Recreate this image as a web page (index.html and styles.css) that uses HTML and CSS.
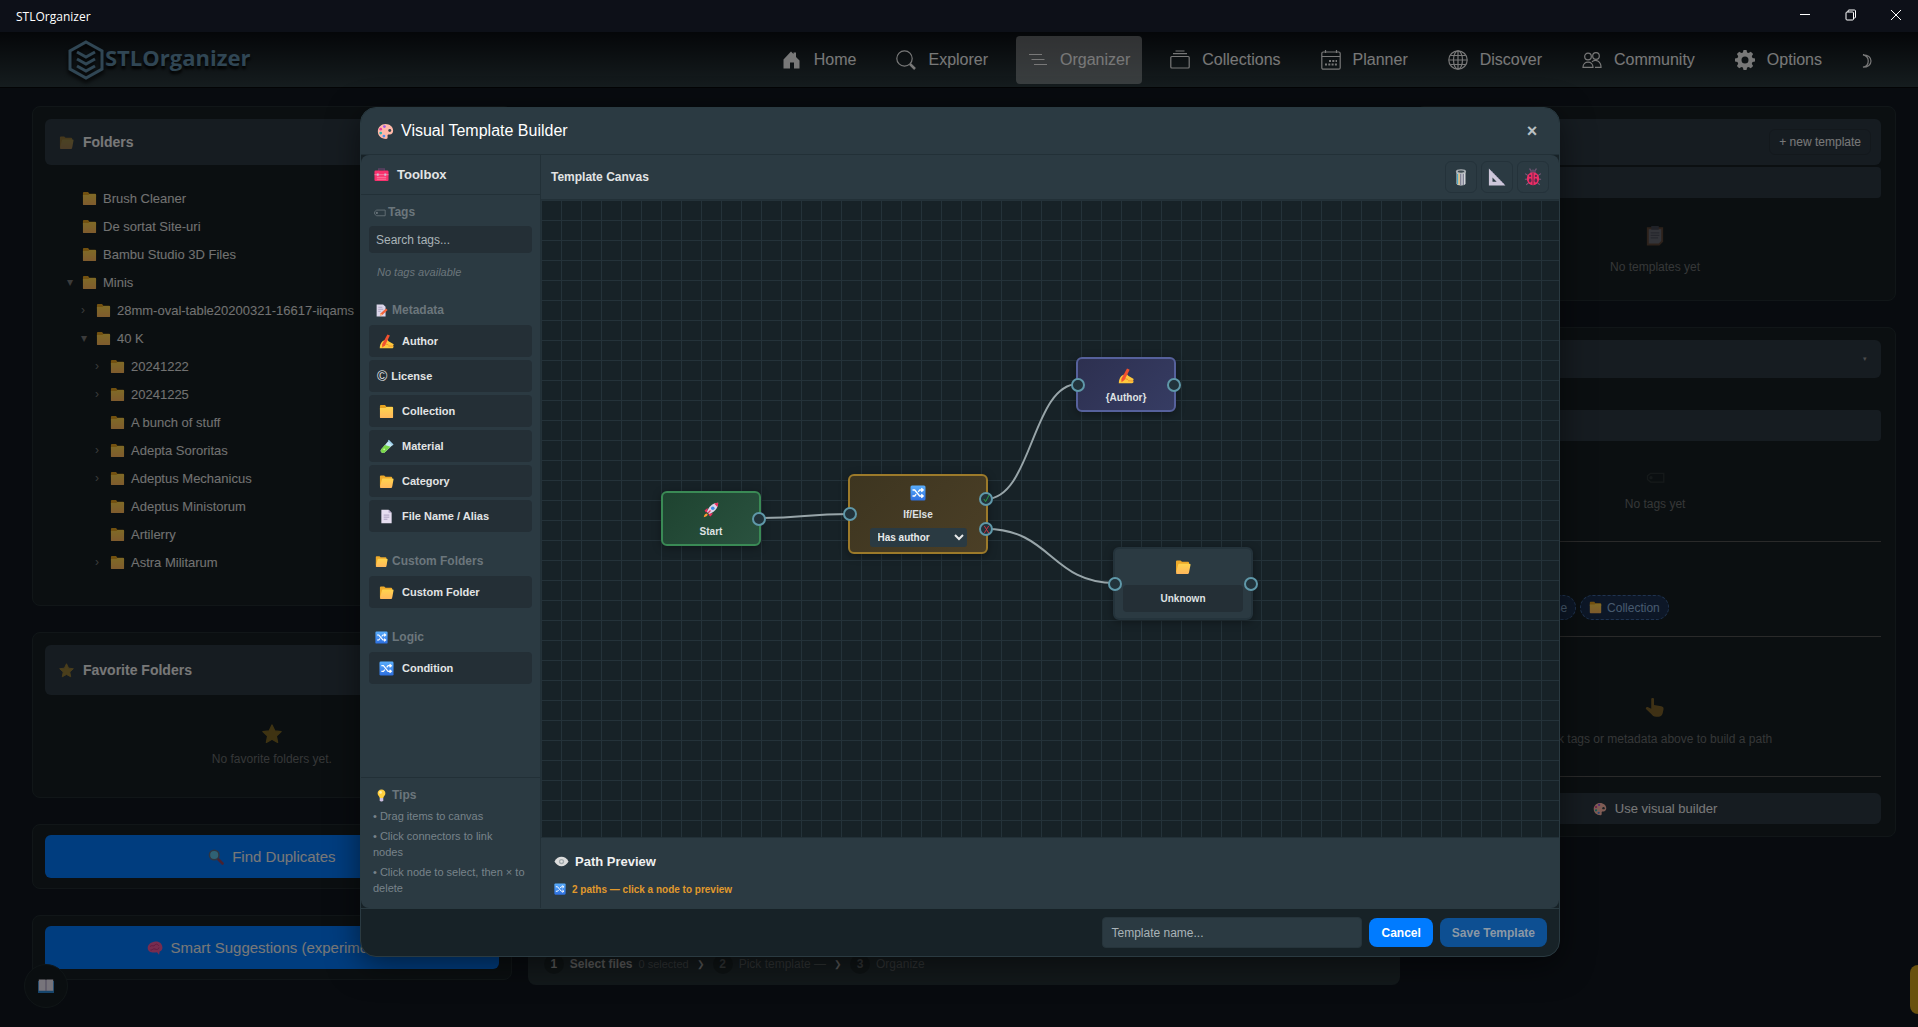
FILE: index.html
```html
<!DOCTYPE html>
<html lang="en">

<head>
    <meta charset="UTF-8">
    <meta name="viewport" content="width=device-width, initial-scale=1.0">
    <title>STLOrganizer</title>
    <link rel="stylesheet" href="styles.css">
</head>

<body>
    <!-- icon sprite -->
    <svg class="sprite" aria-hidden="true">
        <defs>
            <linearGradient id="gFolder" x1="0" y1="0" x2="0" y2="1">
                <stop offset="0" stop-color="#ffd44d" />
                <stop offset="1" stop-color="#ffb75c" />
            </linearGradient>
            <linearGradient id="gBlue" x1="0" y1="0" x2="0" y2="1">
                <stop offset="0" stop-color="#5aaefc" />
                <stop offset="1" stop-color="#2d6fe0" />
            </linearGradient>
        </defs>
        <symbol id="i-folder" viewBox="0 0 16 16">
            <path d="M1 2a1 1 0 0 1 1-1h4.500l1.300 1.800H14a1 1 0 0 1 1 1V6H1z" fill="#e5a220" />
            <path d="M1 4.200h5.800l1.200-.9h6a1 1 0 0 1 1 1V14a1 1 0 0 1-1 1H2a1 1 0 0 1-1-1z" fill="url(#gFolder)" />
        </symbol>
        <symbol id="i-open" viewBox="0 0 16 16">
            <path d="M1 2.500a1 1 0 0 1 1-1h3.500l1.500 1.300h6a1 1 0 0 1 1 1V13H1z" fill="#eda92a" />
            <path d="M3.200 5.500a1 1 0 0 1 1-.8h10.300a1 1 0 0 1 1 1.200l-1.600 8.200a1 1 0 0 1-1 .8H2a1 1 0 0 1-1-1z" fill="url(#gFolder)" />
        </symbol>
        <symbol id="i-palette" viewBox="0 0 16 16">
            <path d="M8 1c4 0 7.200 2.700 7.200 6.200 0 2.200-1.500 3.600-3.200 3.600-1 0-1.700-.1-2 .5-.4.9.9 3.700-1.500 3.700C4 15 .8 12 .8 8S4 1 8 1z" fill="#ffb8a8" />
            <circle cx="3.500" cy="5.800" r="1.300" fill="#e8409a" />
            <circle cx="7" cy="3.400" r="1.300" fill="#a259e8" />
            <circle cx="3.500" cy="9.500" r="1.300" fill="#27b8b0" />
            <circle cx="6.500" cy="12.300" r="1.300" fill="#4a90f0" />
            <circle cx="12" cy="7" r="1.400" fill="#37434a" />
        </symbol>
        <symbol id="i-toolbox" viewBox="0 0 16 16">
            <path d="M5 4V2.200h6V4" fill="none" stroke="#5d3f63" stroke-width="1.500" />
            <rect x=".5" y="3.800" width="15" height="11.200" rx="1.200" fill="#f8316d" />
            <path d="M.5 8.200h15M3 11h10M3 13h10" stroke="#ff8fae" stroke-width=".8" />
            <path d="M3 6.800h2v2.400H3zM11 6.800h2v2.400h-2z" fill="#c9c0d8" />
        </symbol>
        <symbol id="i-tag" viewBox="0 0 16 16">
            <path d="M4.500 5H15v7H4.500L2 10V7z" fill="none" stroke="currentColor" />
            <circle cx="4.800" cy="8.500" r="1.300" fill="currentColor" />
        </symbol>
        <symbol id="i-memo" viewBox="0 0 16 16">
            <path d="M2 .5h8l3 3v12H2z" fill="#dcd6ea" />
            <path d="M4 4h5M4 6.500h6M4 9h3" stroke="#a79dbb" />
            <path d="M13.500 5.500l2 2-6.500 6-3 1 1-3z" fill="#f4643c" />
            <path d="M6 14.500l1-3 2 2z" fill="#ffc28a" />
        </symbol>
        <symbol id="i-write" viewBox="0 0 16 16">
            <path d="M.8 15.200c0-3 1-5.700 3.200-7.700L8.500 5.500l1.700 2.300 5.100 2.900c.6.4.4 1.200-.2 1.300l.4 1.500c0 .9-.6 1.700-1.500 1.700z" fill="#ffc83d" />
            <path d="M6.500 10.500l3.500 1M10 12.800l5 .2" stroke="#ee8b2c" stroke-width=".9" />
            <path d="M9 .5l2.600 1.200L6.500 12 3.500 14.300l-.2-3.300z" fill="#f2512f" />
        </symbol>
        <symbol id="i-tube" viewBox="0 0 16 16">
            <path d="M10 2l4.500 4.500L6 14.300c-2.500 2-5.500-1-3.600-3.400z" fill="#c5e6f7" />
            <path d="M6.300 6.300l6 2L6 14.300c-2.500 2-5.500-1-3.600-3.400z" fill="#79d64a" />
            <path d="M10.500.8l5 5-1 1-5-5z" fill="#9fd4f0" />
            <circle cx="5.500" cy="11" r="1" fill="#c8f59a" />
        </symbol>
        <symbol id="i-page" viewBox="0 0 16 16">
            <path d="M2.500.8h7.700l3.300 3.300v11.100h-11z" fill="#e6def0" />
            <path d="M10.200.8l3.300 3.300h-3.300z" fill="#b5a9c9" />
            <path d="M5 6.500h6M5 8.700h6M5 10.900h4" stroke="#a79cbd" />
        </symbol>
        <symbol id="i-shuffle" viewBox="0 0 16 16">
            <rect x=".5" y=".5" width="15" height="15" rx="1.500" fill="url(#gBlue)" />
            <path d="M2.500 5h2.200l5 6h3M2.500 11h2.200l1.500-1.800M8.200 6.800L9.700 5h3M11.300 3.300L13.200 5l-1.900 1.700M11.300 9.300l1.900 1.700-1.900 1.700" fill="none" stroke="#fff" stroke-width="1.300" />
        </symbol>
        <symbol id="i-bulb" viewBox="0 0 16 16">
            <path d="M8 .5c3 0 4.800 2.200 4.800 4.700 0 2.600-2.300 3.600-2.600 6H5.800c-.3-2.400-2.600-3.400-2.600-6C3.200 2.700 5 .5 8 .5z" fill="#ffcf3f" />
            <circle cx="6.800" cy="4.200" r="1.700" fill="#fff0ad" />
            <path d="M5.800 11.200h4.400v2.500L9 15.500H7l-1.200-1.800z" fill="#cdbfe0" />
        </symbol>
        <symbol id="i-eye" viewBox="0 0 16 16">
            <path d="M.5 8C2.500 4.500 5 3 8 3S13.500 4.500 15.500 8C13.500 11.500 11 13 8 13S2.500 11.500.5 8z" fill="#dcdcdc" />
            <circle cx="8" cy="8" r="2.800" fill="#a3abae" />
            <circle cx="8" cy="8" r="1.300" fill="#e2e2e2" />
        </symbol>
        <symbol id="i-trash" viewBox="0 0 16 16">
            <path d="M4 3h8v10.500c0 1.200-1.700 2-4 2s-4-.8-4-2z" fill="#d3d6da" />
            <path d="M5 5v9.500" stroke="#3fa7c9" />
            <path d="M6.300 5v9.800" stroke="#e5a93b" stroke-width=".8" />
            <path d="M7.800 5v10M10 5v10" stroke="#6d6f86" />
            <ellipse cx="8" cy="3" rx="4.500" ry="2" fill="#a9afb3" />
            <ellipse cx="8" cy="3.200" rx="2.900" ry="1" fill="#3f4c53" />
        </symbol>
        <symbol id="i-ruler" viewBox="0 0 16 16">
            <path d="M.8.5L15.500 15.500H.8zM4 8.500v3.700h3.700z" fill="#cdc6d9" fill-rule="evenodd" />
            <path d="M3 2.700l11.500 11.800" stroke="#a99bc4" stroke-width=".8" stroke-dasharray="1 1.500" />
        </symbol>
        <symbol id="i-bug" viewBox="0 0 16 16">
            <path d="M1 5l3 2M15 5l-3 2M.8 10h3M15.200 10h-3M2 15l2.500-2.500M14 15l-2.500-2.500M6 2.500L5 .5M10 2.500l1-2" stroke="#7b5a7c" />
            <circle cx="8" cy="4" r="2.600" fill="#5b4763" />
            <ellipse cx="8" cy="9.500" rx="5.500" ry="5.800" fill="#ee2e66" />
            <path d="M8 4v11" stroke="#5b2143" stroke-width=".8" />
            <ellipse cx="5.500" cy="11" rx="1.200" ry="1.900" fill="#5a2a4c" />
            <ellipse cx="10.500" cy="11" rx="1.200" ry="1.900" fill="#5a2a4c" />
            <circle cx="5.400" cy="7" r="1" fill="#5a2a4c" />
            <circle cx="10.600" cy="7" r="1" fill="#5a2a4c" />
        </symbol>
        <symbol id="i-rocket" viewBox="0 0 16 16">
            <path d="M4.500 6L1.500 8.500l1.500 2 2-1zM10 11.500L7.500 14.500l-2-1.500 1-2z" fill="#e8325f" />
            <path d="M4 11.500c-1.800 0-3 1.500-3.200 3.700 2-.2 3.700-1.200 3.900-2.900z" fill="#ff9a2f" />
            <path d="M15.200.8C9.500.8 5.500 5 4 10l2 2c5-1.500 9.200-5.500 9.200-11.200z" fill="#dcd6ea" />
            <path d="M15.200.8c-1.500 0-2.900.3-4.100.8l3.300 3.300c.5-1.200.8-2.600.8-4.100z" fill="#e8325f" />
            <circle cx="9.800" cy="6.200" r="1.800" fill="#3f8fe8" />
            <path d="M5 11l2.500-2.500" stroke="#e8325f" stroke-width="1.300" />
        </symbol>
        <symbol id="i-star" viewBox="0 0 16 16">
            <path d="M8 .8l2.200 4.700 5.100.6-3.800 3.500 1 5.100L8 12.200l-4.500 2.500 1-5.100L.7 6.100l5.100-.6z" fill="#fcbf2a" stroke="#fcbf2a" stroke-linejoin="round" />
        </symbol>
        <symbol id="i-search" viewBox="0 0 16 16">
            <path d="M9.500 9.500l5 5" stroke="#8e4463" stroke-width="2.600" stroke-linecap="round" />
            <circle cx="6.200" cy="6" r="4.800" fill="#5fc3e8" stroke="#5d6b85" stroke-width="1.500" />
        </symbol>
        <symbol id="i-brain" viewBox="0 0 16 16">
            <path d="M8.500 1.500c3.800-.3 6.700 2.200 6.900 5.700.2 2.300-1 3.800-2.700 4.300l-.7 3.200-2-2.400C5 13.300.7 12 .7 8c0-3.500 3.500-6.200 7.800-6.500z" fill="#f0599e" />
            <path d="M3 6.500c2-2 3.500.5 5-1.500s3 0 4 1M3.500 10c2 .5 2.500-2 4.500-1s3.500.5 4-1.500" fill="none" stroke="#c83482" />
        </symbol>
        <symbol id="i-book" viewBox="0 0 16 16">
            <path d="M0 3h16v12H0z" fill="#2c8ad8" />
            <path d="M.8 1.500h6.400L8 2l.8-.5h6.400v11.200H.8z" fill="#efe9f7" />
            <path d="M8 2v11" stroke="#9b8fb5" />
        </symbol>
        <symbol id="i-clip" viewBox="0 0 16 16">
            <path d="M1.500 1h13v11.500l-3 3h-10z" fill="#b0714f" />
            <path d="M3 2.500h10V12l-2 2H3z" fill="#c9c4d6" />
            <path d="M5 0h6v3H5z" fill="#777289" />
            <path d="M4.500 5.500h7M4.500 7.500h7M4.500 9.500h6" stroke="#8e88a0" />
        </symbol>
        <symbol id="i-point" viewBox="0 0 16 16">
            <path d="M5 1.500c0-1 2.200-1 2.200 0v4.800l5.800 1c1.500.3 2 1.200 1.800 2.500l-.6 3c-.4 1.800-1.700 2.900-3.500 2.900H9c-2.200 0-3-1-4-2.200L.8 9.500c-.6-1 .7-2 1.700-1.400L5 9.300z" fill="#ffb637" />
        </symbol>
    </svg>

    <header class="titlebar">
        <span>STLOrganizer</span>
        <div class="window-btns">
            <button type="button" aria-label="Minimize"><svg width="12" height="12" viewBox="0 0 12 12"><path d="M1 5.500h10" /></svg></button>
            <button type="button" aria-label="Restore"><svg width="12" height="12" viewBox="0 0 12 12"><rect x="1" y="3" width="7.500" height="8" rx="1" /><path d="M3 3V2q0-1 1-1h5.500q1 0 1 1v6q0 1-1 1h-1" /></svg></button>
            <button type="button" aria-label="Close"><svg width="12" height="12" viewBox="0 0 12 12"><path d="M1 1l10 10M11 1L1 11" /></svg></button>
        </div>
    </header>

    <div class="app">
        <nav class="navbar">
            <a class="logo" href="#">
                <svg width="36" height="40" viewBox="0 0 36 40">
                    <path d="M18 2l16 9v18l-16 9-16-9V11z" />
                    <path d="M9 12l9 5 9-5M9 19l9 5 9-5M9 26l9 5 9-5" />
                </svg>
                <span>STLOrganizer</span>
            </a>
            <div class="nav-links">
                <a href="#"><svg viewBox="0 0 20 20"><path class="fill" d="M1.500 9.500L9 1.500l2.500 2.600V2.500H14V7l3.500 3.500V18.500h-5.500v-6H8v6H1.500z" /></svg>Home</a>
                <a href="#"><svg viewBox="0 0 20 20"><circle cx="8.500" cy="8.500" r="7.700" /><path d="M14 14l5 5" stroke-width="2.500" /></svg>Explorer</a>
                <a href="#" class="active"><svg viewBox="0 0 20 20"><path d="M1 4.500h13M3.500 9.500h13M6 14.500h13" /></svg>Organizer</a>
                <a href="#"><svg viewBox="0 0 20 20"><rect x=".8" y="6.500" width="18.400" height="11.500" rx="1" /><path d="M3 3.700h14M5.500 1h9" /></svg>Collections</a>
                <a href="#"><svg viewBox="0 0 20 20"><rect x=".8" y="2" width="18.400" height="17.200" rx="1.500" /><path d="M1 6.500h18M4.500 0v3M15.500 0v3" /><path d="M4 14.500h12M8 11h8" stroke-width="2" stroke-dasharray="2 1.300" /></svg>Planner</a>
                <a href="#"><svg viewBox="0 0 20 20"><circle cx="10" cy="10" r="9.200" /><ellipse cx="10" cy="10" rx="4.500" ry="9.200" /><path d="M10 1v18M1 10h18M2.500 5.500h15M2.500 14.500h15" /></svg>Discover</a>
                <a href="#"><svg viewBox="0 0 20 20"><circle cx="6" cy="6.500" r="3.300" /><circle cx="14" cy="6" r="3.300" /><path d="M1 17.300c0-7 10-7 10 0zM10 11.800c3.500-3.200 9-.8 9 5.500h-6" /></svg>Community</a>
                <a href="#"><svg viewBox="0 0 20 20"><path class="fill" fill-rule="evenodd" d="M8.500 0h3l.6 2.500 1.500.6 2.200-1.300 2.300 2.300-1.300 2.200.7 1.700 2.500.5v3l-2.500.6-.7 1.600 1.300 2.200-2.300 2.300-2.200-1.300-1.500.6-.6 2.500h-3l-.6-2.500-1.500-.6-2.200 1.300-2.300-2.300 1.300-2.200-.7-1.600L0 11.500v-3L2.500 8l.7-1.700-1.300-2.200 2.300-2.300 2.200 1.300 1.500-.6zM10 6.500a3.500 3.500 0 1 0 0 7 3.500 3.500 0 0 0 0-7z" /></svg>Options</a>
                <button type="button" class="theme-btn" aria-label="Toggle theme"><svg width="12" height="14" viewBox="0 0 12 14"><path class="line" d="M1 .8c5 0 8 2.700 8 6.200s-3 6.200-8 6.200c7-1.500 7-10.900 0-12.400z" /></svg></button>
            </div>
        </nav>

        <main class="columns">
            <div class="col">
                <section class="panel tree-panel">
                    <h2 class="panel-head"><svg class="ic dim"><use href="#i-open" /></svg>Folders</h2>
                    <ul class="tree">
                        <li><i></i><svg class="ic"><use href="#i-folder" /></svg>Brush Cleaner</li>
                        <li><i></i><svg class="ic"><use href="#i-folder" /></svg>De sortat Site-uri</li>
                        <li><i></i><svg class="ic"><use href="#i-folder" /></svg>Bambu Studio 3D Files</li>
                        <li><i>▾</i><svg class="ic"><use href="#i-folder" /></svg>Minis</li>
                        <li class="l1"><i>›</i><svg class="ic"><use href="#i-folder" /></svg>28mm-oval-table20200321-16617-iiqams</li>
                        <li class="l1"><i>▾</i><svg class="ic"><use href="#i-folder" /></svg>40 K</li>
                        <li class="l2"><i>›</i><svg class="ic"><use href="#i-folder" /></svg>20241222</li>
                        <li class="l2"><i>›</i><svg class="ic"><use href="#i-folder" /></svg>20241225</li>
                        <li class="l2"><i></i><svg class="ic"><use href="#i-folder" /></svg>A bunch of stuff</li>
                        <li class="l2"><i>›</i><svg class="ic"><use href="#i-folder" /></svg>Adepta Sororitas</li>
                        <li class="l2"><i>›</i><svg class="ic"><use href="#i-folder" /></svg>Adeptus Mechanicus</li>
                        <li class="l2"><i></i><svg class="ic"><use href="#i-folder" /></svg>Adeptus Ministorum</li>
                        <li class="l2"><i></i><svg class="ic"><use href="#i-folder" /></svg>Artilerry</li>
                        <li class="l2"><i>›</i><svg class="ic"><use href="#i-folder" /></svg>Astra Militarum</li>
                    </ul>
                </section>
                <section class="panel fav-panel">
                    <h2 class="panel-head tall"><svg class="ic dim"><use href="#i-star" /></svg>Favorite Folders</h2>
                    <div class="empty"><svg><use href="#i-star" /></svg>No favorite folders yet.</div>
                </section>
                <section class="panel">
                    <button type="button" class="big-btn"><svg><use href="#i-search" /></svg>Find Duplicates</button>
                </section>
                <section class="panel">
                    <button type="button" class="big-btn"><svg><use href="#i-brain" /></svg>Smart Suggestions (experimental)</button>
                </section>
            </div>

            <div class="col center">
                <ol class="steps">
                    <li class="on"><b>1</b><strong>Select files</strong><small>0 selected</small></li>
                    <li><b>2</b>Pick template —</li>
                    <li><b>3</b>Organize</li>
                </ol>
            </div>

            <div class="col right">
                <section class="panel templates">
                    <div class="panel-head"><button type="button" class="new-btn">+ new template</button></div>
                    <div class="bar"></div>
                    <div class="empty"><svg><use href="#i-clip" /></svg>No templates yet</div>
                </section>
                <section class="panel tags">
                    <div class="panel-head short"><span class="caret">▾</span></div>
                    <div class="bar"></div>
                    <div class="empty tag-empty"><svg><use href="#i-tag" /></svg>No tags yet</div>
                    <div class="chips">
                        <button type="button" class="chip"><svg><use href="#i-write" /></svg>Author</button>
                        <button type="button" class="chip">© License</button>
                        <button type="button" class="chip"><svg><use href="#i-folder" /></svg>Collection</button>
                    </div>
                    <div class="empty path"><svg><use href="#i-point" /></svg>Click tags or metadata above to build a path</div>
                    <div class="builder">
                        <button type="button" class="builder-btn"><svg><use href="#i-palette" /></svg>Use visual builder</button>
                    </div>
                </section>
            </div>
        </main>

        <button type="button" class="help-btn" aria-label="Manual"><svg><use href="#i-book" /></svg></button>
        <div class="side-tab"></div>

        <div class="overlay">
            <div class="modal" role="dialog" aria-labelledby="modalTitle">
                <div class="modal-head">
                    <h1 id="modalTitle"><svg><use href="#i-palette" /></svg>Visual Template Builder</h1>
                    <button type="button" class="close-btn" aria-label="Close">×</button>
                </div>

                <div class="modal-body">
                    <aside class="toolbox">
                        <h2><svg><use href="#i-toolbox" /></svg>Toolbox</h2>
                        <div class="tools">
                            <h3 class="tag-head"><svg><use href="#i-tag" /></svg>Tags</h3>
                            <input type="text" class="tag-search" placeholder="Search tags..." aria-label="Search tags">
                            <p class="none">No tags available</p>

                            <h3><svg><use href="#i-memo" /></svg>Metadata</h3>
                            <div class="items">
                                <button type="button"><svg><use href="#i-write" /></svg>Author</button>
                                <button type="button" class="plain"><span>©</span>License</button>
                                <button type="button"><svg><use href="#i-folder" /></svg>Collection</button>
                                <button type="button"><svg><use href="#i-tube" /></svg>Material</button>
                                <button type="button"><svg><use href="#i-open" /></svg>Category</button>
                                <button type="button"><svg><use href="#i-page" /></svg>File Name / Alias</button>
                            </div>

                            <h3><svg><use href="#i-open" /></svg>Custom Folders</h3>
                            <div class="items">
                                <button type="button"><svg><use href="#i-open" /></svg>Custom Folder</button>
                            </div>

                            <h3><svg><use href="#i-shuffle" /></svg>Logic</h3>
                            <div class="items">
                                <button type="button"><svg><use href="#i-shuffle" /></svg>Condition</button>
                            </div>
                        </div>
                        <div class="tips">
                            <h3><svg><use href="#i-bulb" /></svg>Tips</h3>
                            <p>• Drag items to canvas</p>
                            <p>• Click connectors to link<br>nodes</p>
                            <p>• Click node to select, then × to<br>delete</p>
                        </div>
                    </aside>

                    <div class="work">
                        <div class="canvas-head">
                            <h2>Template Canvas</h2>
                            <div class="canvas-btns">
                                <button type="button" aria-label="Clear"><svg><use href="#i-trash" /></svg></button>
                                <button type="button" aria-label="Auto layout"><svg><use href="#i-ruler" /></svg></button>
                                <button type="button" aria-label="Debug"><svg><use href="#i-bug" /></svg></button>
                            </div>
                        </div>

                        <div class="canvas">
                            <svg class="wires">
                                <path d="M218 318C264 318 263 314 309 314" />
                                <path d="M445 299C491 299 491 184 537 184" />
                                <path d="M445 329C510 329 510 383 574 383" />
                            </svg>
                            <div class="node start">
                                <svg class="nic"><use href="#i-rocket" /></svg>
                                <span>Start</span>
                                <i class="port out"></i>
                            </div>
                            <div class="node cond">
                                <svg class="nic"><use href="#i-shuffle" /></svg>
                                <span>If/Else</span>
                                <select aria-label="Condition">
                                    <option>Has author</option>
                                    <option>Has license</option>
                                </select>
                                <i class="port in"></i>
                                <i class="port out yes"><svg viewBox="0 0 10 10"><path d="M2 5.500L4 8.500 8 1" /></svg></i>
                                <i class="port out no"><svg viewBox="0 0 10 10"><path d="M2.500 1l5 8M7.500 1l-5 8" /></svg></i>
                            </div>
                            <div class="node meta">
                                <svg class="nic"><use href="#i-write" /></svg>
                                <span>{Author}</span>
                                <i class="port in"></i>
                                <i class="port out"></i>
                            </div>
                            <div class="node custom">
                                <svg class="nic"><use href="#i-open" /></svg>
                                <input type="text" value="Unknown" aria-label="Folder name">
                                <i class="port in"></i>
                                <i class="port out"></i>
                            </div>
                        </div>

                        <div class="preview">
                            <h2><svg><use href="#i-eye" /></svg>Path Preview</h2>
                            <p><svg><use href="#i-shuffle" /></svg>2 paths — click a node to preview</p>
                        </div>
                    </div>
                </div>

                <div class="modal-foot">
                    <input type="text" placeholder="Template name..." aria-label="Template name">
                    <button type="button" class="btn">Cancel</button>
                    <button type="button" class="btn" disabled>Save Template</button>
                </div>
            </div>
        </div>
    </div>
</body>

</html>
```
FILE: styles.css
```css
* {
    box-sizing: border-box;
    margin: 0;
    padding: 0;
}

body {
    height: 100vh;
    display: flex;
    flex-direction: column;
    overflow: hidden;
    background: #10161f;
    color: #f0f0f0;
    font-family: "Liberation Sans", Arial, sans-serif;
    font-size: 13px;
}

button,
input,
select {
    font: inherit;
    color: inherit;
    border: none;
    background: none;
}

ul,
ol {
    list-style: none;
}

a {
    color: inherit;
    text-decoration: none;
}

i {
    font-style: normal;
}

svg {
    flex: none;
}

.sprite {
    position: absolute;
    width: 0;
    height: 0;
}

/* window title */
.titlebar {
    height: 32px;
    flex: none;
    display: flex;
    align-items: center;
    justify-content: space-between;
    padding-left: 16px;
    background: #0d1018;
    color: #fff;
    font: 12px "Open Sans", "Noto Sans", sans-serif;
}

.window-btns {
    display: flex;
}

.window-btns button {
    width: 46px;
    height: 30px;
}

.window-btns button:last-child {
    width: 44px;
}

.window-btns svg {
    fill: none;
    stroke: #fff;
}

.app {
    flex: 1;
    min-height: 0;
    display: flex;
    flex-direction: column;
    position: relative;
}

/* navbar */
.navbar {
    height: 56px;
    flex: none;
    display: flex;
    align-items: center;
    justify-content: space-between;
    padding: 0 32px 0 68px;
    background: linear-gradient(#0a0d12, #2b393d);
    border-bottom: 1px solid #06090b;
}

.logo {
    display: flex;
    align-items: center;
    gap: 1px;
    color: #608ca8;
    font: bold 22px "Open Sans", sans-serif;
    text-shadow: 0 3px 3px #000;
}

.logo span {
    padding-bottom: 6px;
}

.logo svg {
    fill: none;
    stroke: currentColor;
    stroke-width: 3;
    filter: drop-shadow(0 3px 2px #000);
}

.nav-links {
    display: flex;
    align-items: center;
    gap: 16px;
    font-size: 16px;
}

.nav-links a {
    height: 48px;
    display: flex;
    align-items: center;
    gap: 12px;
    padding: 0 12px;
    border-radius: 4px;
}

.nav-links a.active {
    background: rgba(255, 255, 255, .35);
}

.nav-links svg {
    fill: none;
    stroke: currentColor;
    stroke-width: 1.2;
}

.nav-links a svg {
    width: 20px;
    height: 20px;
}

.nav-links .fill {
    fill: currentColor;
    stroke: none;
}

.theme-btn {
    padding: 6px 12px 0;
}

/* page columns */
.columns {
    flex: 1;
    min-height: 0;
    display: grid;
    grid-template-columns: 11fr 20fr 11fr;
    gap: 16px;
    padding: 18px 22px 42px 32px;
}

.col {
    min-width: 0;
    display: flex;
    flex-direction: column;
    gap: 26px;
}

.center {
    justify-content: flex-end;
}

.panel {
    padding: 12px;
    background: #161f22;
    border: 1px solid #222d30;
    border-radius: 8px;
}

.right .panel {
    padding-right: 14px;
}

.panel-head {
    height: 46px;
    display: flex;
    align-items: center;
    gap: 9px;
    padding: 0 14px;
    background: #2c3843;
    border-radius: 6px;
    font-size: 14px;
}

.panel-head.tall {
    height: 50px;
}

.panel-head.short {
    height: 38px;
    margin-bottom: 32px;
}

.ic {
    width: 15px;
    height: 15px;
}

.dim {
    opacity: .5;
}

.tree {
    padding: 19px 0 17px 20px;
    white-space: nowrap;
}

.tree li {
    height: 28px;
    display: flex;
    align-items: center;
    color: #e4e4e4;
}

.tree .ic {
    margin-right: 6px;
}

.tree i {
    width: 17px;
    padding-left: 2px;
    font-size: 12px;
    color: #777;
}

.tree .l1 {
    padding-left: 14px;
}

.tree .l2 {
    padding-left: 28px;
}

.empty {
    display: flex;
    flex-direction: column;
    align-items: center;
    gap: 8px;
    padding: 29px 0;
    color: #6c6e70;
    font-size: 12px;
}

.empty svg {
    width: 20px;
    height: 20px;
    opacity: .45;
}

.fav-panel .empty {
    padding-bottom: 19px;
}

.big-btn {
    width: 100%;
    height: 43px;
    display: flex;
    align-items: center;
    justify-content: center;
    gap: 8px;
    border-radius: 6px;
    background: #007bff;
    font-size: 15px;
}

.big-btn svg {
    width: 16px;
    height: 16px;
}

.fav-panel + .panel,
.fav-panel + .panel + .panel {
    padding: 10px 12px;
}

.steps {
    height: 42px;
    display: flex;
    align-items: center;
    gap: 8px;
    padding: 0 16px;
    background: #263236;
    border-radius: 8px;
    color: #5f6467;
    font-size: 12px;
}

.steps li {
    display: flex;
    align-items: center;
    gap: 6px;
}

.steps li + li::before {
    content: "❯";
    margin-right: 2px;
    font-size: 9px;
    color: #aaa;
}

.steps b {
    width: 20px;
    height: 20px;
    border-radius: 50%;
    background: #1d2629;
    line-height: 20px;
    text-align: center;
}

.steps .on b,
.steps strong {
    color: #b0b0b0;
}

.steps small {
    font-size: 11px;
}

/* right column */
.templates .panel-head {
    justify-content: flex-end;
    padding-right: 10px;
}

.new-btn {
    padding: 5px 9px;
    border: 1px solid #263039;
    border-radius: 6px;
    font-size: 12px;
}

.bar {
    height: 31px;
    margin-top: 2px;
    border-radius: 4px;
    background: #2c3843;
}

.templates .empty {
    gap: 14px;
    padding: 28px 0 14px;
}

.caret {
    margin-left: auto;
    font-size: 7px;
    color: #999;
}

.tags .empty {
    gap: 10px;
    padding: 26px 0 30px;
    border-bottom: 1px solid #555;
}

.tag-empty svg {
    opacity: .25;
}

.chips {
    display: flex;
    gap: 4px;
    padding: 53px 0 16px;
    border-bottom: 1px solid #555;
}

.chip {
    height: 25px;
    display: flex;
    align-items: center;
    gap: 5px;
    padding: 0 8px;
    border: 1px dashed #3f67a0;
    border-radius: 13px;
    background: #1b2f4f;
    color: #8fb4dd;
    font-size: 12px;
}

.chip svg {
    width: 13px;
    height: 13px;
}

.tags .path {
    gap: 15px;
    padding-top: 60px;
}

.builder {
    padding-top: 16px;
}

.builder-btn {
    width: 100%;
    height: 31px;
    display: flex;
    align-items: center;
    justify-content: center;
    gap: 8px;
    border-radius: 6px;
    background: #2c3843;
}

.builder-btn svg {
    width: 14px;
    height: 14px;
}

.help-btn {
    position: absolute;
    left: 24px;
    bottom: 19px;
    width: 44px;
    height: 44px;
    border-radius: 50%;
    border: 1px solid #202b2e;
    background: #151d20;
}

.help-btn svg {
    width: 18px;
    height: 16px;
    vertical-align: middle;
}

.side-tab {
    position: absolute;
    right: 0;
    bottom: 13px;
    width: 8px;
    height: 49px;
    border-radius: 8px 0 0 8px;
    background: #d2a21c;
}

/* modal */
.overlay {
    position: absolute;
    inset: 0;
    display: flex;
    justify-content: center;
    padding: 75px 24px 70px 26px;
    background: rgba(0, 0, 0, .5);
}

.modal {
    width: 100%;
    max-width: 1200px;
    display: flex;
    flex-direction: column;
    overflow: hidden;
    background: #172227;
    border: 1px solid #2a3a41;
    border-radius: 16px;
    box-shadow: 0 8px 32px rgba(0, 0, 0, .5);
}

.modal-head {
    height: 47px;
    flex: none;
    display: flex;
    align-items: center;
    justify-content: space-between;
    padding: 0 20px 0 16px;
    background: #2b3a42;
    border-bottom: 1px solid #223037;
}

.modal h1,
.modal h2,
.modal h3 {
    display: flex;
    align-items: center;
}

.modal h1 {
    gap: 7px;
    font-size: 16px;
    font-weight: normal;
    color: #fff;
}

.modal h1 svg {
    width: 17px;
    height: 17px;
}

.modal h2 {
    font-size: 13px;
    color: #e2e4e5;
}

.modal .canvas-head h2 {
    font-size: 12px;
}

.close-btn {
    font-size: 18px;
    font-weight: bold;
    line-height: 20px;
    color: #b9c0c3;
    width: 14px;
}

.modal-body {
    flex: 1;
    min-height: 0;
    display: flex;
    border-radius: 8px;
    overflow: hidden;
}

.toolbox {
    width: 180px;
    flex: none;
    display: flex;
    flex-direction: column;
    background: #2b3a42;
    border-right: 1px solid #223037;
}

.toolbox h2 {
    height: 40px;
    gap: 8px;
    padding: 0 13px;
    border-bottom: 1px solid #223037;
}

.toolbox h2 svg {
    width: 15px;
    height: 15px;
}

.tools {
    flex: 1;
    padding: 10px 8px 0;
}

.toolbox h3 {
    height: 14px;
    gap: 4px;
    padding-left: 6px;
    font-size: 12px;
    color: #6b767c;
}

.toolbox h3 svg {
    width: 13px;
    height: 13px;
}

.toolbox .tag-head {
    gap: 2px;
    padding-left: 4px;
}

.tag-search {
    width: 100%;
    height: 27px;
    margin: 7px 0 13px;
    padding: 0 7px;
    border-radius: 4px;
    background: #242f36;
    font-size: 12px;
}

::placeholder {
    color: #a9b3b8;
    opacity: 1;
}

.none {
    margin-bottom: 24px;
    padding-left: 8px;
    font-size: 11px;
    line-height: 13px;
    font-style: italic;
    color: #6b767c;
}

.items {
    display: grid;
    gap: 3px;
    margin: 8px 0 22px;
}

.items button {
    height: 32px;
    display: flex;
    align-items: center;
    gap: 8px;
    padding: 0 10px;
    border-radius: 4px;
    background: #242f36;
    color: #e2e4e5;
    font-size: 11px;
    font-weight: bold;
    text-align: left;
}

.items button.plain {
    gap: 4px;
    padding-left: 8px;
}

.items span {
    font-size: 14px;
    font-weight: normal;
}

.items svg {
    width: 15px;
    height: 15px;
}

.tips {
    padding: 10px 8px 12px 12px;
    border-top: 1px solid #223037;
    font-size: 11px;
    line-height: 16px;
    color: #78838a;
    white-space: nowrap;
}

.tips h3 {
    margin-bottom: 6px;
    padding-left: 2px;
}

.tips p {
    margin-bottom: 4px;
}

.tips p:last-child {
    margin-bottom: 0;
}

/* canvas */
.work {
    flex: 1;
    min-width: 0;
    display: flex;
    flex-direction: column;
}

.canvas-head {
    height: 45px;
    flex: none;
    display: flex;
    align-items: center;
    justify-content: space-between;
    padding: 0 10px;
    background: #2b3a42;
    border-bottom: 1px solid #223037;
}

.canvas-btns {
    display: flex;
    gap: 4px;
}

.canvas-btns button {
    width: 32px;
    height: 32px;
    display: grid;
    place-items: center;
    border: 1px solid #24323a;
    border-radius: 6px;
}

.canvas-btns svg {
    width: 18px;
    height: 18px;
}

.canvas {
    flex: 1;
    position: relative;
    overflow: hidden;
    background-image: linear-gradient(#243239 1px, transparent 1px), linear-gradient(90deg, #243239 1px, transparent 1px);
    background-size: 20px 20px;
}

.wires {
    position: absolute;
    width: 100%;
    height: 100%;
    fill: none;
    stroke: #98a5a9;
    stroke-width: 2;
}

.node {
    position: absolute;
    width: 100px;
    display: flex;
    flex-direction: column;
    align-items: center;
    gap: 6px;
    padding: 9px 6px 5px;
    border: 2px solid #24333b;
    border-radius: 6px;
    background: #2b3a42;
    color: #dfe2e3;
    font-size: 10px;
    font-weight: bold;
    line-height: 15px;
    box-shadow: 0 2px 8px rgba(0, 0, 0, .35);
}

.nic {
    width: 16px;
    height: 16px;
}

.start {
    left: 120px;
    top: 291px;
    border-color: #3a8a55;
    background: linear-gradient(135deg, #1e4330, #2a523f);
}

.cond {
    left: 307px;
    top: 274px;
    width: 140px;
    border-color: #9c7a2a;
    background: linear-gradient(135deg, #3d3520, #4b3f26);
}

.meta {
    left: 535px;
    top: 157px;
    border-color: #56619c;
    background: linear-gradient(135deg, #2d3050, #363c63);
}

.custom {
    left: 572px;
    top: 347px;
    width: 140px;
    gap: 10px;
    padding: 10px 8px 6px;
}

.custom input {
    width: 100%;
    height: 27px;
    border-radius: 4px;
    background: #242f36;
    text-align: center;
}

.node select {
    width: 97px;
    height: 19px;
    padding-left: 4px;
    border-radius: 3px;
    background: #2a3a42;
    color: #e8eaea;
}

.port {
    position: absolute;
    top: 50%;
    width: 14px;
    height: 14px;
    margin-top: -7px;
    display: grid;
    place-items: center;
    border: 2px solid #5f98a9;
    border-radius: 50%;
    background: #22333b;
}

.port.in {
    left: -7px;
}

.port.out {
    right: -7px;
}

.port.yes {
    top: 30%;
}

.port.no {
    top: 70%;
}

.port svg {
    width: 9px;
    height: 9px;
    fill: none;
    stroke: #28a745;
}

.port.no svg {
    stroke: #dc3545;
}

.preview {
    height: 71px;
    flex: none;
    padding: 16px 13px;
    background: #2b3a42;
    border-top: 1px solid #223037;
}

.preview h2 {
    height: 15px;
    gap: 6px;
    color: #f0f0f0;
}

.preview h2 svg {
    width: 15px;
    height: 15px;
}

.preview p {
    display: flex;
    align-items: center;
    gap: 6px;
    margin-top: 14px;
    font-size: 10px;
    font-weight: bold;
    color: #e0992c;
}

.preview p svg {
    width: 12px;
    height: 12px;
}

.modal-foot {
    height: 48px;
    flex: none;
    display: flex;
    align-items: center;
    justify-content: flex-end;
    gap: 7px;
    padding: 0 12px;
    border-top: 1px solid #2a3a41;
    font-size: 12px;
}

.modal-foot input {
    width: 260px;
    height: 31px;
    padding: 0 8px;
    border: 1px solid #26343b;
    border-radius: 4px;
    background: #2b3a42;
}

.btn {
    height: 29px;
    padding: 0 12px;
    border-radius: 8px;
    background: #007bff;
    color: #fff;
    font-weight: bold;
}

.btn:disabled {
    background: #0d4f92;
    color: #8b98a5;
}
```
